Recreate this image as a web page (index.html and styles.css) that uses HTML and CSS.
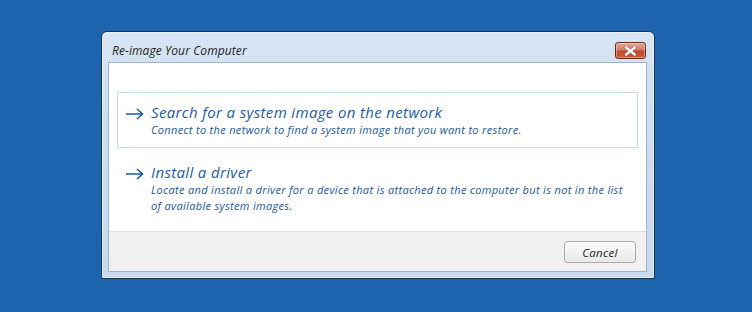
FILE: index.html
```html
<!DOCTYPE html>
<html>
<head>
<meta charset="utf-8">
<link rel="stylesheet" href="styles.css">
</head>
<body>
<div class="desktop">
  <div class="window">
    <div class="titlebar">
      <span class="title">Re-image Your Computer</span>
      <div class="close" aria-label="Close">
        <svg width="15" height="10" viewBox="0 0 15 10"><path d="M3 1.5 L12 8.5 M12 1.5 L3 8.5" stroke="#5b1d12" stroke-width="3.6" stroke-linecap="square" opacity="0.35"/><path d="M3.2 1.5 L11.8 8.5 M11.8 1.5 L3.2 8.5" stroke="#ffffff" stroke-width="2.4" stroke-linecap="square"/></svg>
      </div>
    </div>
    <div class="client">
      <div class="options">
        <div class="option hover">
          <svg class="arrow" width="19" height="12" viewBox="0 0 19 12"><path d="M1 6 H17.5 M12 1 L17.5 6 L12 11" fill="none" stroke="#1a5aa6" stroke-width="1.6"/></svg>
          <div class="option-text">
            <div class="option-title">Search for a system image on the network</div>
            <div class="option-desc">Connect to the network to find a system image that you want to restore.</div>
          </div>
        </div>
        <div class="option">
          <svg class="arrow" width="19" height="12" viewBox="0 0 19 12"><path d="M1 6 H17.5 M12 1 L17.5 6 L12 11" fill="none" stroke="#1a5aa6" stroke-width="1.6"/></svg>
          <div class="option-text">
            <div class="option-title">Install a driver</div>
            <div class="option-desc">Locate and install a driver for a device that is attached to the computer but is not in the list of available system images.</div>
          </div>
        </div>
      </div>
      <div class="footer">
        <button class="btn">Cancel</button>
      </div>
    </div>
  </div>
</div>
</body>
</html>
```

FILE: styles.css
```css
html, body {
  margin: 0;
  padding: 0;
}
body {
  background: #1d63ae;
  width: 752px;
  height: 312px;
  overflow: hidden;
  font-family: "Open Sans", "Noto Sans", sans-serif;
}
.desktop {
  padding: 31px 0 0 101px;
}
.window {
  border: 1px solid #1d3452;
  border-radius: 6px 6px 2px 2px;
  background: linear-gradient(180deg, #d7e4f3 0%, #cfdff0 30%, #c6d9ee 100%);
  box-shadow: inset 0 0 0 1px rgba(255,255,255,0.55);
  padding: 0 7px 6px 6px;
  box-sizing: border-box;
  width: 554px;
  height: 248px;
  display: flex;
  flex-direction: column;
}
.titlebar {
  height: 30px;
  flex: none;
  display: flex;
  align-items: flex-start;
  justify-content: space-between;
}
.title {
  font-style: italic;
  font-size: 12px;
  color: #1e1e1e;
  margin: 10px 0 0 4px;
  letter-spacing: 0.1px;
}
.close {
  margin-top: 10px;
  margin-right: 1px;
  width: 29px;
  height: 15px;
  border: 1px solid #6a2a1e;
  border-radius: 3px;
  background: linear-gradient(180deg, #e0a897 0%, #d27e67 45%, #c04a2e 55%, #cb5e3f 100%);
  box-shadow: inset 0 0 0 1px rgba(255,255,255,0.35);
  display: flex;
  align-items: center;
  justify-content: center;
}
.client {
  flex: 1;
  background: #ffffff;
  border: 1px solid #9fb3cb;
  display: flex;
  flex-direction: column;
}
.options {
  flex: 1;
  padding: 29px 8px 0 8px;
  display: flex;
  flex-direction: column;
  gap: 4px;
}
.option {
  display: flex;
  align-items: flex-start;
  padding: 9px 10px 9px 7px;
  border: 1px solid transparent;
}
.option.hover {
  border-color: #c3dbea;
  height: 36px;
}
.arrow {
  flex: none;
  margin-top: 6px;
  margin-right: 7px;
}
.option-text {
  color: #1d5ba8;
  font-style: italic;
  max-width: 480px;
}
.option-title {
  font-size: 15px;
  line-height: 20px;
  letter-spacing: 0.35px;
}
.option-desc {
  font-size: 11px;
  line-height: 16px;
  color: #22579a;
  letter-spacing: 0.33px;
}
.footer {
  height: 39px;
  flex: none;
  background: #f0f0f0;
  border-top: 1px solid #dfdfdf;
  display: flex;
  align-items: center;
  justify-content: flex-end;
  padding-right: 10px;
}
.btn {
  width: 72px;
  height: 22px;
  border: 1px solid #acacac;
  border-radius: 3px;
  background: linear-gradient(180deg, #fbfbfb 0%, #f2f2f2 50%, #e9e9e9 100%);
  font-family: "Open Sans", "Noto Sans", sans-serif;
  font-style: italic;
  font-size: 11.5px;
  color: #1e1e1e;
  padding: 0;
  margin-top: 1px;
  letter-spacing: 0.3px;
}
```
